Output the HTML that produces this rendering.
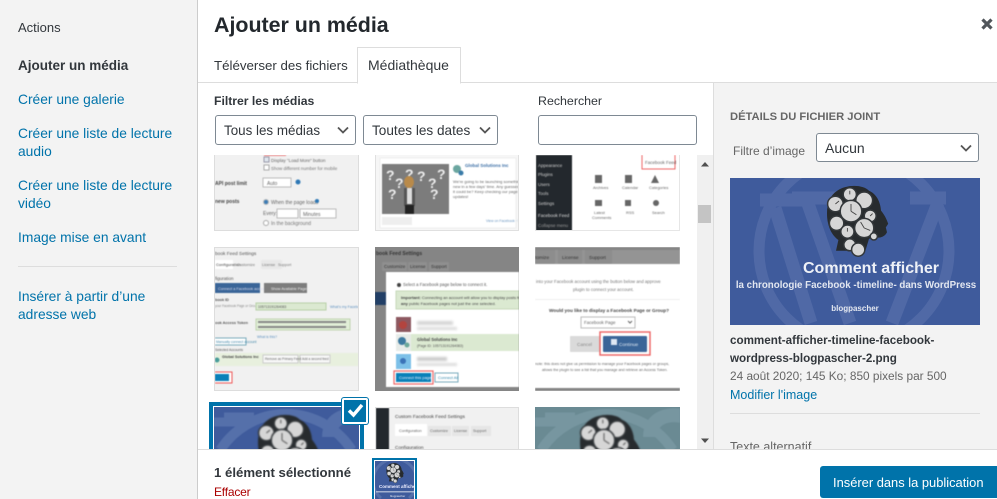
<!DOCTYPE html>
<html lang="fr">
<head>
<meta charset="utf-8">
<title>Ajouter un média</title>
<style>
html,body{margin:0;padding:0;width:997px;height:499px;overflow:hidden;background:#fff;font-family:"Liberation Sans",sans-serif;color:#32373c}
.a,.t{position:absolute}
.t{white-space:nowrap;font-size:14px;line-height:18px}
.link{color:#0073aa;font-size:13.8px}
.sel{position:absolute;box-sizing:border-box;background:#fff;border:1px solid #7e8993;border-radius:3px;font-size:13.4px;line-height:29px;padding-left:8px;color:#32373c;white-space:nowrap}
.sel svg{position:absolute;right:5px;top:9px}
.th{position:absolute;overflow:hidden;background:#f1f1f1;box-sizing:border-box}
.th svg{display:block;position:absolute;left:0;top:0;filter:blur(.4px)}
.th text{font-family:"Liberation Sans",sans-serif}
</style>
</head>
<body>
<svg width="0" height="0" style="position:absolute">
<defs>
<g id="head">
<path d="M37 8C52-3 80-3 90 8c12 5 19 18 20 33 5 6 9 13 12 22l-4 6 2 8c-3 6-8 9-16 9l-14 2-6 20H35l4-18C25 80 20 62 20 46 20 28 25 16 37 8z" fill="#272b2e"/>
<g fill="#d6d6d6" stroke="#33373a" stroke-width="2.500">
<circle cx="34" cy="30" r="13"/><circle cx="58" cy="14" r="11"/><circle cx="82" cy="24" r="14"/><circle cx="36" cy="62" r="12"/>
<circle cx="60" cy="42" r="18"/><circle cx="92" cy="50" r="10"/><circle cx="82" cy="70" r="16"/><circle cx="54" cy="76" r="11"/>
<circle cx="58" cy="98" r="10"/><circle cx="72" cy="106" r="11"/><circle cx="98" cy="84" r="6"/>
</g>
<path d="M60 42V30M60 42l9 6M82 70l-6-10M82 70l10 4M58 14v-6M34 30l6-5M54 76v-6M92 50l4-4" stroke="#444" stroke-width="1.500" fill="none"/>
</g>
</defs>
</svg>

<!-- sidebar -->
<div class="a" style="left:0;top:0;width:197px;height:499px;background:#f3f3f3;border-right:1px solid #ccc"></div>
<div class="t" style="left:18px;top:19px;font-size:13px;color:#32373c">Actions</div>
<div class="t" style="left:18px;top:57px;font-weight:bold;color:#32373c;font-size:13.5px">Ajouter un média</div>
<div class="t link" style="left:18px;top:91px">Créer une galerie</div>
<div class="t link" style="left:18px;top:125px">Créer une liste de lecture</div>
<div class="t link" style="left:18px;top:143px">audio</div>
<div class="t link" style="left:18px;top:177px">Créer une liste de lecture</div>
<div class="t link" style="left:18px;top:195px">vidéo</div>
<div class="t link" style="left:18px;top:229px">Image mise en avant</div>
<div class="a" style="left:18px;top:266px;width:159px;height:1px;background:#ddd"></div>
<div class="t link" style="left:18px;top:288px">Insérer à partir d’une</div>
<div class="t link" style="left:18px;top:306px">adresse web</div>

<!-- header -->
<div class="t" style="left:214px;top:10px;font-size:21.400px;line-height:30px;font-weight:bold;color:#23282d">Ajouter un média</div>
<svg class="a" style="left:981px;top:18px" width="12" height="12" viewBox="0 0 12 12"><path d="M1.500 1.500l9 9M10.500 1.500l-9 9" stroke="#50555a" stroke-width="3.200"/></svg>
<div class="a" style="left:198px;top:82px;width:799px;height:1px;background:#ddd"></div>
<div class="t" style="left:214px;top:57px;font-size:13.300px;color:#32373c">Téléverser des fichiers</div>
<div class="a" style="left:357px;top:47px;width:102px;height:35px;border:1px solid #ddd;border-bottom:1px solid #fff;background:#fff"></div>
<div class="t" style="left:368px;top:56px;color:#32373c">Médiathèque</div>

<!-- toolbar -->
<div class="t" style="left:214px;top:92px;font-weight:bold;font-size:12.200px;color:#32373c">Filtrer les médias</div>
<div class="sel" style="left:215px;top:115px;width:141px;height:30px">Tous les médias<svg width="14" height="10" viewBox="0 0 14 10"><path d="M2 2.500l5 5 5-5" fill="none" stroke="#555" stroke-width="1.800"/></svg></div>
<div class="sel" style="left:363px;top:115px;width:135px;height:30px;font-size:13.600px">Toutes les dates<svg width="14" height="10" viewBox="0 0 14 10"><path d="M2 2.500l5 5 5-5" fill="none" stroke="#555" stroke-width="1.800"/></svg></div>
<div class="t" style="left:538px;top:92px;color:#32373c;font-size:12.400px">Rechercher</div>
<div class="a" style="left:538px;top:115px;width:157px;height:28px;border:1px solid #7e8993;border-radius:3px;background:#fff"></div>

<!-- thumbs row 1 -->
<div class="th" style="left:214px;top:155px;width:145px;height:76px;background:#f1f1f1;border:1px solid #ddd;border-top:0">
<svg width="145" height="76">
<rect x="49" y="0" width="22" height="1" fill="#e88"/>
<rect x="49" y="2" width="5" height="5" fill="#dfe6ee" stroke="#99a"/>
<text x="56" y="7" font-size="4.500" fill="#666">Display "Load More" button</text>
<rect x="49" y="10" width="5" height="5" fill="#fff" stroke="#aaa"/>
<text x="56" y="15" font-size="4.500" fill="#777">Show different number for mobile</text>
<text x="0" y="30" font-size="5" font-weight="bold" fill="#444">API post limit</text>
<rect x="48" y="23" width="28" height="9" fill="#fff" stroke="#bbb"/><text x="52" y="30" font-size="5" fill="#666">Auto</text>
<circle cx="83" cy="27" r="2.500" fill="#2e78b5"/>
<text x="0" y="48" font-size="5" font-weight="bold" fill="#444">new posts</text>
<circle cx="51" cy="47" r="2.500" fill="#3d7cb5" stroke="#bbb"/><text x="56" y="49" font-size="5" fill="#666">When the page loads</text>
<circle cx="102" cy="46" r="2" fill="#2e78b5"/>
<text x="48" y="60" font-size="5" fill="#666">Every:</text>
<rect x="62" y="54" width="21" height="9" fill="#fff" stroke="#bbb"/><rect x="85" y="54" width="36" height="9" fill="#fff" stroke="#bbb"/>
<text x="88" y="61" font-size="5" fill="#666">Minutes</text>
<circle cx="51" cy="68" r="2.500" fill="#fff" stroke="#aaa"/><text x="56" y="70" font-size="5" fill="#777">In the background</text>
</svg></div>
<div class="th" style="left:375px;top:155px;width:144px;height:76px;background:#f6f6f6;border:1px solid #e0e0e0;border-top:0">
<svg width="144" height="76">
<rect x="4" y="3" width="136" height="70" fill="#fff" stroke="#eee"/>
<rect x="6" y="9" width="67" height="50" fill="#7c7c7c"/>
<g fill="#eee" font-weight="bold" font-size="14"><text x="10" y="25">?</text><text x="19" y="33">?</text><text x="29" y="24">?</text><text x="41" y="26">?</text><text x="52" y="33">?</text><text x="61" y="24">?</text><text x="54" y="44">?</text><text x="12" y="44">?</text></g>
<ellipse cx="33" cy="27" rx="5" ry="6" fill="#b98a4a"/><rect x="28" y="33" width="11" height="18" fill="#555"/><rect x="29" y="50" width="9" height="9" fill="#222"/><rect x="31" y="33" width="5" height="16" fill="#ddd"/>
<circle cx="81" cy="14" r="4" fill="#6ba6a0"/><circle cx="85" cy="18" r="2.500" fill="#3a7ba8"/>
<text x="89" y="12" font-size="4.500" font-weight="bold" fill="#3a6ea5">Global Solutions Inc</text>
<g font-size="4" fill="#666"><text x="77" y="28">We're going to be launching something</text><text x="77" y="33">new in a few days' time. Any guesses what</text><text x="77" y="38">it could be? Keep checking our page for</text><text x="77" y="43">updates!</text></g>
<rect x="6" y="62" width="30" height="8" fill="#eee"/>
<text x="110" y="67" font-size="3.500" fill="#6a95c0">View on Facebook · Share</text>
</svg></div>
<div class="th" style="left:535px;top:155px;width:145px;height:76px;background:#fff;border:1px solid #e6e6e6;border-top:0">
<svg width="145" height="76">
<rect x="-1" y="0" width="37" height="76" fill="#23282d"/>
<g font-size="4.500" fill="#ccc"><text x="2" y="12">Appearance</text><text x="2" y="21">Plugins</text><text x="2" y="31">Users</text><text x="2" y="40">Tools</text><text x="2" y="50">Settings</text><text x="2" y="62" fill="#ddd">Facebook Feed</text><text x="2" y="72" fill="#999">Collapse menu</text></g>
<rect x="106" y="-3" width="33" height="17" fill="#fff" stroke="#e66" stroke-width="1"/>
<text x="109" y="9" font-size="4.500" fill="#666">Facebook Feed</text>
<g fill="#666"><rect x="59" y="20" width="7" height="8"/><rect x="89" y="20" width="7" height="8"/><path d="M119 20l4 8h-8z"/><rect x="59" y="45" width="7" height="6"/><rect x="89" y="45" width="6" height="6"/><circle cx="120" cy="48" r="3"/></g>
<g font-size="4" fill="#666"><text x="57" y="34">Archives</text><text x="86" y="34">Calendar</text><text x="113" y="34">Categories</text><text x="58" y="59">Latest</text><text x="56" y="64">Comments</text><text x="90" y="59">RSS</text><text x="116" y="59">Search</text></g>
</svg></div>

<!-- thumbs row 2 -->
<div class="th" style="left:214px;top:247px;width:145px;height:144px;background:#f1f1f1;border:1px solid #ddd">
<svg width="145" height="144">
<text x="0" y="7" font-size="4.800" fill="#555">book Feed Settings</text>
<rect x="46" y="12" width="21" height="9" fill="#e8e8e8"/><rect x="0" y="12" width="18" height="9" fill="#fff"/>
<g font-size="3.800" fill="#777"><text x="1" y="18" font-weight="bold">Configuration</text><text x="22" y="18">Customize</text><text x="47" y="18">License</text><text x="63" y="18">Support</text></g>
<text x="0" y="32" font-size="4.500" fill="#555">figuration</text>
<rect x="-1" y="35" width="46" height="10" fill="#3a6598"/><text x="3" y="42" font-size="3.800" fill="#dde">Connect a Facebook account</text>
<rect x="49" y="35" width="43" height="10" fill="#7d7d7d"/><text x="56" y="42" font-size="3.800" fill="#eee">Show Available Pages</text>
<text x="0" y="53" font-size="3.800" font-weight="bold" fill="#555">book ID</text>
<text x="0" y="59" font-size="3.200" fill="#888">your Facebook Page or Group</text>
<rect x="41" y="55" width="70" height="7" fill="#dbe9d1" stroke="#b7d0a7"/><text x="43" y="60" font-size="3.400" fill="#555">105713191264083</text>
<text x="115" y="60" font-size="3.600" fill="#5b8fbf">What's my Facebook ID?</text>
<text x="0" y="76" font-size="3.800" font-weight="bold" fill="#555">ook Access Token</text>
<rect x="41" y="71" width="94" height="11" fill="#e1eed7" stroke="#c0d4b0"/>
<rect x="43" y="73" width="88" height="2" fill="#888"/><rect x="43" y="78" width="88" height="2" fill="#888"/>
<text x="42" y="90" font-size="3.500" fill="#5b8fbf">What is this?</text>
<rect x="-1" y="90" width="32" height="7" fill="#fff" stroke="#7ab" /><text x="1" y="95" font-size="3.500" fill="#48a">Manually connect account</text>
<text x="0" y="103" font-size="3.400" fill="#555">Selected Accounts</text>
<rect x="-1" y="105" width="146" height="13" fill="#e8f0de"/>
<circle cx="2" cy="112" r="2.500" fill="#4a9d9a"/>
<text x="7" y="110" font-size="3.800" font-weight="bold" fill="#444">Global Solutions Inc</text>
<rect x="48" y="107" width="35" height="8" fill="#f8f8f8" stroke="#ccc"/><rect x="85" y="107" width="30" height="8" fill="#f8f8f8" stroke="#ccc"/>
<text x="50" y="112" font-size="3.200" fill="#666">Remove as Primary Feed</text><text x="87" y="112" font-size="3.200" fill="#666">Add a second feed</text>
<rect x="-1" y="124" width="18" height="11" fill="#fff" stroke="#e55" stroke-width="1"/>
<rect x="-1" y="126" width="15" height="7" fill="#0a80b8"/>
</svg></div>
<div class="th" style="left:375px;top:247px;width:144px;height:144px;background:#858585">
<svg width="144" height="144">
<text x="1" y="8" font-size="5" font-weight="bold" fill="#333">book Feed Settings</text>
<rect x="7" y="15" width="25" height="9" fill="#8f8f8f"/><rect x="33" y="15" width="19" height="9" fill="#8f8f8f"/><rect x="54" y="15" width="20" height="9" fill="#8f8f8f"/>
<g font-size="4.500" fill="#333"><text x="9" y="21">Customize</text><text x="35" y="21">License</text><text x="56" y="21">Support</text></g>
<rect x="0" y="45" width="11" height="13" fill="#223f66"/>
<rect x="11" y="25" width="133" height="115" fill="#fff"/>
<g font-size="4.300" fill="#555"><text x="28" y="39">Select a Facebook page below to connect it.</text></g>
<circle cx="24" cy="38" r="2" fill="#444"/>
<rect x="21" y="44" width="123" height="18" fill="#dbe9d1" stroke="#c6d9b9"/>
<text x="26" y="52" font-size="4" fill="#444"><tspan font-weight="bold">Important:</tspan> Connecting an account will allow you to display posts from</text>
<text x="26" y="58" font-size="4" fill="#444"><tspan font-weight="bold">any</tspan> public Facebook pages not just the one selected.</text>
<rect x="21" y="70" width="15" height="15" fill="#8d5860"/><circle cx="28" cy="78" r="4" fill="#b3443f"/>
<rect x="42" y="74" width="36" height="4" fill="#ccc" opacity=".8" style="filter:blur(1px)"/><rect x="42" y="80" width="40" height="3" fill="#ddd" style="filter:blur(1px)"/>
<rect x="21" y="87" width="123" height="17" fill="#dbe9d1"/>
<rect x="21" y="87" width="15" height="17" fill="#e7ebe8"/>
<circle cx="27" cy="94" r="4" fill="#3d7aa0"/><circle cx="32" cy="98" r="2.500" fill="#6ba89a"/>
<text x="42" y="94" font-size="4.200" font-weight="bold" fill="#444">Global Solutions Inc</text><text x="42" y="100" font-size="3.500" fill="#555">(Page ID: 105713191264083)</text>
<rect x="21" y="107" width="15" height="15" fill="#7cc0e8"/><circle cx="28" cy="114" r="3" fill="#3b73b8"/>
<rect x="42" y="110" width="30" height="4" fill="#ccc" style="filter:blur(1px)"/><rect x="42" y="116" width="40" height="3" fill="#ddd" style="filter:blur(1px)"/>
<rect x="19" y="124" width="39" height="13" fill="#fff" stroke="#e66" stroke-width="1.200"/>
<rect x="21" y="126" width="35" height="9" fill="#0a80b8"/><text x="24" y="132" font-size="4" fill="#eef">Connect this page</text>
<rect x="60" y="126" width="23" height="9" fill="#fff" stroke="#7ab"/><text x="63" y="132" font-size="4" fill="#38a">Connect All</text>
</svg></div>
<div class="th" style="left:535px;top:247px;width:145px;height:144px;background:#fff">
<svg width="145" height="144">
<rect x="0" y="0" width="145" height="17" fill="#949494"/><rect x="0" y="0" width="145" height="3" fill="#858585"/>
<rect x="-2" y="3" width="22" height="14" fill="#8d8d8d"/><rect x="23" y="3" width="24" height="14" fill="#8d8d8d"/><rect x="50" y="3" width="27" height="14" fill="#8d8d8d"/>
<g font-size="4.800" fill="#333"><text x="0" y="12">tomize</text><text x="27" y="12">License</text><text x="54" y="12">Support</text></g>
<g font-size="4.400" fill="#777"><text x="1" y="36">into your Facebook account using the button below and approve</text><text x="38" y="44">plugin to connect your account.</text></g>
<rect x="0" y="52" width="145" height="1" fill="#eee"/>
<text x="14" y="65" font-size="4.700" font-weight="bold" fill="#444">Would you like to display a Facebook Page or Group?</text>
<rect x="46" y="70" width="54" height="11" fill="#fff" stroke="#bbb"/><text x="49" y="77" font-size="4.500" fill="#666">Facebook Page</text>
<path d="M93 74l2 2 2-2" fill="none" stroke="#666"/>
<rect x="35" y="89" width="30" height="16" rx="1" fill="#dadada"/><text x="42" y="99" font-size="4.800" fill="#888">Cancel</text>
<rect x="65" y="85" width="50" height="23" fill="#fff" stroke="#ec5f5f" stroke-width="1.400"/>
<rect x="68" y="89" width="44" height="16" rx="1" fill="#3a6598"/>
<rect x="76" y="92" width="6" height="6" fill="#dfe8f3"/><text x="84" y="99" font-size="4.800" fill="#dfe8f3">Continue</text>
<g font-size="3.700" fill="#666"><text x="0" y="118">note: this does not give us permission to manage your Facebook pages or groups,</text><text x="7" y="124">allows the plugin to see a list that you manage and retrieve an Access Token.</text></g>
<rect x="0" y="141" width="145" height="3" fill="#858585"/>
</svg></div>

<!-- thumbs row 3 -->
<div class="a" style="left:209px;top:402px;width:155px;height:48px;background:#0073aa"></div>
<div class="a" style="left:213px;top:406px;width:147px;height:44px;background:#fff"></div>
<div class="th" style="left:214px;top:407px;width:145px;height:43px;background:#3f5b9c">
<svg width="145" height="43">
<path d="M6.300 43A78 78 0 0 1 137.700 43" fill="none" stroke="#5570aa" stroke-width="10"/><path d="M0 15h30M10 10h30" stroke="#5570aa" stroke-width="9"/><path d="M115 30c0-20 20-25 35-20" fill="none" stroke="#5570aa" stroke-width="14"/>
<svg x="0" y="0" width="145" height="43"><use href="#head" transform="translate(32,8) scale(.6)"/></svg>
</svg></div>
<div class="a" style="left:342px;top:398px;width:22px;height:22px;background:#0073aa;border:2px solid #fff;box-shadow:0 0 0 1px #0073aa;border-radius:2px"></div>
<svg class="a" style="left:347px;top:403px" width="17" height="15" viewBox="0 0 17 15"><path d="M2 7.500l4.500 4.500 8.500-10" fill="none" stroke="#fff" stroke-width="3.400"/></svg>

<div class="th" style="left:375px;top:407px;width:144px;height:43px;background:#f1f1f1;border:1px solid #ddd">
<svg width="144" height="43">
<rect x="-1" y="-1" width="14" height="43" fill="#23282d"/>
<text x="19" y="10" font-size="4.800" fill="#444">Custom Facebook Feed Settings</text>
<rect x="19" y="16" width="32" height="12" fill="#fff"/><rect x="52" y="18" width="23" height="10" fill="#e6e6e6"/><rect x="76" y="18" width="17" height="10" fill="#e6e6e6"/><rect x="95" y="18" width="20" height="10" fill="#e6e6e6"/>
<g font-size="3.800" fill="#666"><text x="23" y="24">Configuration</text><text x="54" y="24">Customize</text><text x="78" y="24">License</text><text x="97" y="24">Support</text></g>
<text x="19" y="41" font-size="4.800" fill="#444">Configuration</text>
</svg></div>
<div class="th" style="left:535px;top:407px;width:145px;height:43px;background:#6a8a93">
<svg width="145" height="43">
<path d="M6.300 43A78 78 0 0 1 137.700 43" fill="none" stroke="#7796a0" stroke-width="10"/><path d="M0 15h30M10 10h30" stroke="#7796a0" stroke-width="9"/><path d="M115 30c0-20 20-25 35-20" fill="none" stroke="#7796a0" stroke-width="14"/>
<svg x="0" y="0" width="145" height="43"><use href="#head" transform="translate(33,8) scale(.6)"/></svg>
</svg></div>

<!-- scrollbar -->
<div class="a" style="left:697px;top:155px;width:16px;height:294px;background:#f0f0f0"></div>
<div class="a" style="left:698px;top:205px;width:13px;height:18px;background:#c4c4c4"></div>
<svg class="a" style="left:700px;top:161px" width="10" height="6"><path d="M1 5.500L5 1l4 4.500z" fill="#505050"/></svg>
<svg class="a" style="left:700px;top:438px" width="10" height="6"><path d="M1 .5L5 5l4-4.500z" fill="#505050"/></svg>

<!-- right panel -->
<div class="a" style="left:713px;top:83px;width:284px;height:366px;background:#f3f3f3;border-left:1px solid #ddd;box-sizing:border-box;overflow:hidden">
<div class="t" style="left:16px;top:25px;font-size:11.200px;font-weight:bold;color:#666">DÉTAILS DU FICHIER JOINT</div>
<div class="t" style="left:19px;top:59px;font-size:12px;color:#666">Filtre d’image</div>
<div class="sel" style="left:102px;top:50px;width:163px;height:29px;font-size:14px;line-height:28px">Aucun<svg width="14" height="10" viewBox="0 0 14 10"><path d="M2 2.500l5 5 5-5" fill="none" stroke="#555" stroke-width="1.800"/></svg></div>
<div class="a" style="left:16px;top:95px;width:250px;height:147px;background:#3f5b9c;overflow:hidden">
<svg width="250" height="147" style="filter:blur(.3px)">
<circle cx="124" cy="73" r="95" fill="none" stroke="#5069a6" stroke-width="11"/>
<path d="M45 30l36 115M30 22h55M76 20l44 125M62 20h50M208 25l-46 120M180 20h36" fill="none" stroke="#5069a6" stroke-width="13"/>
<use href="#head" transform="translate(85,8) scale(.6)"/>
<text x="141" y="95" text-anchor="middle" font-size="16" font-weight="bold" fill="#eef1f7">Comment afficher</text>
<text x="126" y="110" text-anchor="middle" font-size="9.750" font-weight="bold" fill="#e3e7f0">la chronologie Facebook -timeline- dans WordPress</text>
<text x="125" y="133" text-anchor="middle" font-size="8" fill="#e3e7f0" font-weight="bold">blogpascher</text>
</svg></div>
<div class="t" style="left:16px;top:249px;font-size:11.650px;font-weight:bold;color:#32373c">comment-afficher-timeline-facebook-</div>
<div class="t" style="left:16px;top:267px;font-size:11.650px;font-weight:bold;color:#32373c">wordpress-blogpascher-2.png</div>
<div class="t" style="left:16px;top:284px;font-size:11.850px;color:#666">24 août 2020; 145 Ko; 850 pixels par 500</div>
<div class="t link" style="left:16px;top:303px;font-size:12.500px">Modifier l'image</div>
<div class="a" style="left:16px;top:330px;width:250px;height:1px;background:#ddd"></div>
<div class="t" style="left:16px;top:355px;font-size:12.500px;color:#666">Texte alternatif</div>
</div>

<!-- footer -->
<div class="a" style="left:198px;top:449px;width:799px;height:50px;background:#fff;border-top:1px solid #ddd;box-sizing:border-box"></div>
<div class="t" style="left:214px;top:464px;font-weight:bold;font-size:13.200px;color:#32373c">1 élément sélectionné</div>
<div class="t" style="left:214px;top:486px;height:13px;line-height:13px;font-size:12px;letter-spacing:-.2px;color:#a00">Effacer</div>
<div class="a" style="left:372px;top:458px;width:45px;height:41px;background:#0073aa;overflow:hidden">
<div class="a" style="left:2px;top:2px;width:41px;height:39px;background:#fff"></div>
<div class="a" style="left:3px;top:3px;width:39px;height:38px;background:#3f5b9c;overflow:hidden">
<svg width="39" height="38" style="filter:blur(.3px)">
<path d="M6 37A22 22 0 1 1 34 37" fill="none" stroke="#5570aa" stroke-width="3"/>
<use href="#head" transform="translate(8,2) scale(.17)"/>
<text x="4" y="27" font-size="4.500" font-weight="bold" fill="#eef">Comment afficher</text>
<rect x="1" y="30" width="38" height="1.500" fill="#cfd6e6" opacity=".7"/>
<text x="15" y="36" font-size="2.800" fill="#e3e7f0">blogpascher</text>
</svg></div></div>
<div class="a" style="left:820px;top:466px;width:177px;height:32px;background:#0073aa;border-radius:3px 0 0 3px;color:#fff;font-size:12.900px;line-height:33px;text-indent:13px;white-space:nowrap">Insérer dans la publication</div>
</body>
</html>
